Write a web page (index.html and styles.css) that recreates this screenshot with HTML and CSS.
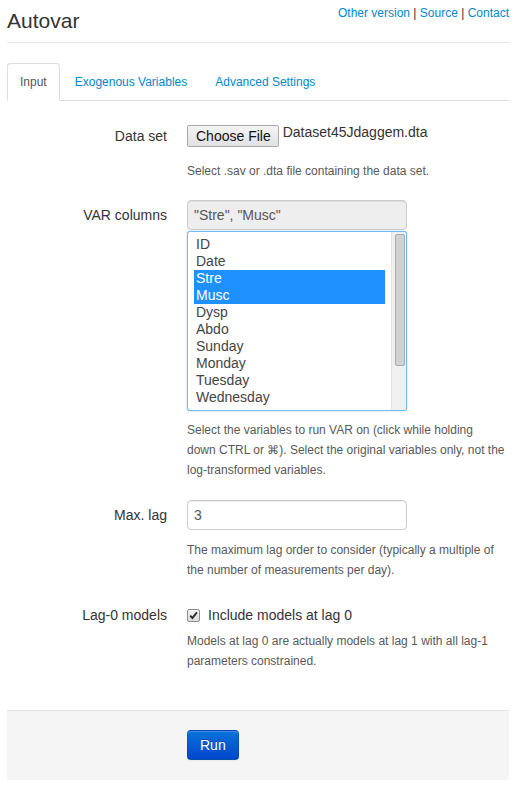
FILE: index.html
```html
<!DOCTYPE html>
<html lang="en">
<head>
<meta charset="utf-8">
<title>Autovar</title>
<link rel="stylesheet" href="styles.css">
</head>
<body>
<div class="page">
  <header class="top">
    <h1 class="title">Autovar</h1>
    <nav class="links"><a href="#">Other version</a> | <a href="#">Source</a> | <a href="#">Contact</a></nav>
  </header>

  <ul class="tabs">
    <li class="active"><a href="#">Input</a></li>
    <li><a href="#">Exogenous Variables</a></li>
    <li><a href="#">Advanced Settings</a></li>
  </ul>

  <form class="form">
    <div class="group group-file">
      <label class="label">Data set</label>
      <div class="controls">
        <div class="file">
          <button type="button" class="file-btn">Choose File</button>
          <span class="file-name">Dataset45Jdaggem.dta</span>
        </div>
        <p class="help">Select .sav or .dta file containing the data set.</p>
      </div>
    </div>

    <div class="group">
      <label class="label">VAR columns</label>
      <div class="controls">
        <div class="input readonly">"Stre", "Musc"</div>
        <div class="select">
          <div class="list">
            <div class="opts">
              <div class="opt">ID</div>
              <div class="opt">Date</div>
              <div class="opt sel">Stre</div>
              <div class="opt sel">Musc</div>
              <div class="opt">Dysp</div>
              <div class="opt">Abdo</div>
              <div class="opt">Sunday</div>
              <div class="opt">Monday</div>
              <div class="opt">Tuesday</div>
              <div class="opt">Wednesday</div>
            </div>
          </div>
          <div class="track"><div class="thumb"></div></div>
        </div>
        <p class="help help-select">Select the variables to run VAR on (click while holding down&nbsp;CTRL or &#8984;). Select the original variables only, not the log-transformed variables.</p>
      </div>
    </div>

    <div class="group">
      <label class="label">Max. lag</label>
      <div class="controls">
        <div class="input">3</div>
        <p class="help">The maximum lag order to consider (typically a multiple of the number of measurements per day).</p>
      </div>
    </div>

    <div class="group group-last">
      <label class="label">Lag-0 models</label>
      <div class="controls">
        <label class="checkbox">
          <span class="check"><svg width="9" height="9" viewBox="0 0 9 9"><path d="M1.2 4.6 L3.4 7 L7.9 1.4" fill="none" stroke="#2b2b2b" stroke-width="1.9"/></svg></span>
          <span>Include models at lag 0</span>
        </label>
        <p class="help help-check">Models at lag 0 are actually models at lag 1 with all lag-1 parameters constrained.</p>
      </div>
    </div>

    <div class="actions">
      <button type="button" class="btn-run">Run</button>
    </div>
  </form>
</div>
</body>
</html>
```
FILE: styles.css
```css
* { box-sizing: border-box; }

body {
  margin: 0;
  font-family: "Liberation Sans", Arial, sans-serif;
  font-size: 14px;
  line-height: 20px;
  color: #333;
  background: #fff;
}

.page {
  padding: 0 8px 0 7px;
}

.top {
  display: flex;
  justify-content: space-between;
  align-items: flex-start;
  height: 43px;
  border-bottom: 1px solid #e5e5e5;
}

.title {
  margin: 9px 0 0;
  font-size: 21px;
  line-height: 24px;
  font-weight: normal;
  color: #333;
}

.links {
  margin-top: 3px;
  font-size: 12px;
  line-height: 20px;
  color: #333;
}

.links a {
  color: #0088cc;
  text-decoration: none;
}

.tabs {
  list-style: none;
  margin: 20px 0;
  padding: 0;
  display: flex;
  border-bottom: 1px solid #ddd;
}

.tabs li {
  margin: 0 2px -1px 0;
}

.tabs a {
  display: block;
  padding: 8px 12px;
  font-size: 12px;
  line-height: 20px;
  color: #0088cc;
  text-decoration: none;
  border: 1px solid transparent;
  border-radius: 4px 4px 0 0;
}

.tabs .active a {
  color: #555;
  background: #fff;
  border-color: #ddd #ddd transparent;
}

.form {
  margin: 0;
}

.group {
  display: grid;
  grid-template-columns: 160px 1fr;
  column-gap: 20px;
  margin-bottom: 20px;
}

.group-file {
  margin-bottom: 19px;
}

.label {
  text-align: right;
  padding-top: 5px;
  color: #333;
}

.controls {
  min-width: 0;
}

.help {
  margin: 10px 0 0;
  font-size: 12px;
  line-height: 20px;
  color: #595959;
}

.help-select {
  margin-top: 9px;
}

.help-check {
  margin-top: 6px;
}

.file {
  display: flex;
  align-items: flex-start;
  height: 30px;
}

.file-btn {
  margin-top: 4px;
  height: 22px;
  padding: 0 7px 0 8px;
  font-family: "Liberation Sans", Arial, sans-serif;
  font-size: 14px;
  line-height: 20px;
  color: #111;
  background: linear-gradient(#f4f4f4, #e1e1e1);
  border: 1px solid #a9a9a9;
  border-radius: 2px;
}

.file-name {
  margin: 1px 0 0 4px;
  color: #333;
}

.input {
  width: 220px;
  height: 30px;
  padding: 4px 6px;
  border: 1px solid #ccc;
  border-radius: 4px;
  color: #555;
  background: #fff;
  box-shadow: inset 0 1px 1px rgba(0, 0, 0, 0.075);
}

.readonly {
  background: #eee;
}

.select {
  display: flex;
  width: 220px;
  height: 180px;
  margin-top: 1px;
  border: 1px solid rgba(82, 168, 236, 0.8);
  border-radius: 3px;
  background: #fff;
  box-shadow: 0 0 2px rgba(82, 168, 236, 0.5);
  overflow: hidden;
}

.list {
  flex: 1;
  padding: 4px 6px;
}

.opts {
  height: 170px;
  overflow: hidden;
}

.opt {
  padding: 0 2px;
  font-size: 14px;
  line-height: 17px;
  color: #444;
}

.opt.sel {
  background: #1e90ff;
  color: #fff;
}

.track {
  width: 15px;
  padding: 2px 1px 0 3px;
  background: #f0f0f0;
  border-left: 1px solid #e4e4e4;
}

.thumb {
  height: 132px;
  background: #d2d2d2;
  border: 1px solid #acacac;
  border-radius: 2px;
}

.checkbox {
  display: flex;
  align-items: center;
  gap: 8px;
  padding-top: 5px;
  line-height: 20px;
  color: #333;
}

.check {
  display: flex;
  align-items: center;
  justify-content: center;
  width: 13px;
  height: 13px;
  margin-left: 0;
  border: 1px solid #8f8f8f;
  border-radius: 2px;
  background: linear-gradient(#f2f2f2, #dcdcdc);
}

.group-last {
  margin-bottom: 39px;
}

.actions {
  padding: 19px 20px 20px 180px;
  background: #f5f5f5;
  border-top: 1px solid #e5e5e5;
}

.btn-run {
  display: block;
  padding: 4px 12px;
  font-family: "Liberation Sans", Arial, sans-serif;
  font-size: 14px;
  line-height: 20px;
  color: #fff;
  text-shadow: 0 -1px 0 rgba(0, 0, 0, 0.25);
  background: linear-gradient(#0a72da, #0046cc);
  border: 1px solid #0040b0;
  border-color: rgba(0, 0, 0, 0.1) rgba(0, 0, 0, 0.1) rgba(0, 0, 0, 0.25);
  border-radius: 4px;
  box-shadow: inset 0 1px 0 rgba(255, 255, 255, 0.2), 0 1px 2px rgba(0, 0, 0, 0.05);
}
```
